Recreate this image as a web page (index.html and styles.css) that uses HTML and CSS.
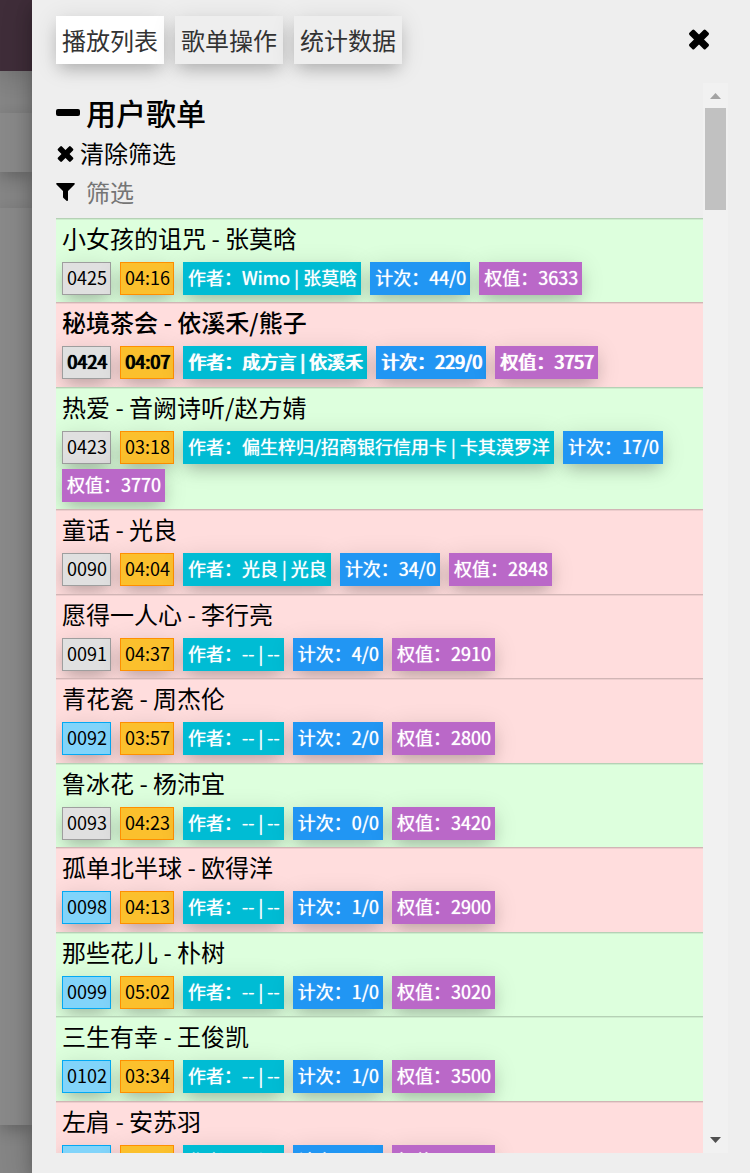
FILE: index.html
```
<!DOCTYPE html>
<html lang="zh-CN">
<head>
<meta charset="utf-8">
<meta name="viewport" content="width=device-width, initial-scale=1">
<title>播放列表</title>
<link rel="stylesheet" href="styles.css">
</head>
<body>
<div class="app">
  <div class="page" aria-hidden="true">
    <div class="page-header"></div>
    <div class="page-card"></div>
    <div class="page-card page-card-tall"></div>
  </div>
  <aside class="drawer">
    <header class="drawer-head">
      <nav class="tabs">
        <button class="tab active" type="button">播放列表</button>
        <button class="tab" type="button">歌单操作</button>
        <button class="tab" type="button">统计数据</button>
      </nav>
      <button class="close" type="button" aria-label="关闭">
        <svg width="22" height="22" viewBox="0 0 22 22"><g transform="rotate(45 11 10.500)"><rect x="-.5" y="7" width="23" height="7" rx="1.500"/><rect x="7.500" y="-1" width="7" height="23" rx="1.500"/></g></svg>
      </button>
    </header>
    <div class="viewport">
      <main class="content">
        <h2 class="heading"><svg width="24" height="8" viewBox="0 0 24 8"><rect y="1" width="24" height="7" rx="2"/></svg>用户歌单</h2>
        <button class="clear" type="button"><svg width="18" height="18" viewBox="0 0 18 18"><g transform="rotate(45 9.500 10)"><rect x=".5" y="7.200" width="18" height="5.600" rx="1.200"/><rect x="6.700" y="1" width="5.600" height="18" rx="1.200"/></g></svg>清除筛选</button>
        <label class="filter"><svg width="20" height="20" viewBox="0 0 20 20"><path d="M1 1h17c1 0 1 1 .5 1.500L12 9v9c0 1-.8 1.200-1.500.7L7.500 16c-.4-.4-.5-.6-.5-1V9L.5 2.500C0 2 0 1 1 1z"/></svg><input class="filter-input" type="text" placeholder="筛选" aria-label="筛选"></label>
        <ul class="songs">
          <li class="song"><div class="title">小女孩的诅咒 - 张莫晗</div><div class="tags"><span class="tag id">0425</span><span class="tag time">04:16</span><span class="tag author">作者：Wimo | 张莫晗</span><span class="tag count">计次：44/0</span><span class="tag weight">权值：3633</span></div></li>
          <li class="song red playing"><div class="title">秘境茶会 - 依溪禾/熊子</div><div class="tags"><span class="tag id">0424</span><span class="tag time">04:07</span><span class="tag author">作者：成方言 | 依溪禾</span><span class="tag count">计次：229/0</span><span class="tag weight">权值：3757</span></div></li>
          <li class="song"><div class="title">热爱 - 音阙诗听/赵方婧</div><div class="tags"><span class="tag id">0423</span><span class="tag time">03:18</span><span class="tag author">作者：偏生梓归/招商银行信用卡 | 卡其漠罗洋</span><span class="tag count">计次：17/0</span><span class="tag weight">权值：3770</span></div></li>
          <li class="song red"><div class="title">童话 - 光良</div><div class="tags"><span class="tag id">0090</span><span class="tag time">04:04</span><span class="tag author">作者：光良 | 光良</span><span class="tag count">计次：34/0</span><span class="tag weight">权值：2848</span></div></li>
          <li class="song red"><div class="title">愿得一人心 - 李行亮</div><div class="tags"><span class="tag id">0091</span><span class="tag time">04:37</span><span class="tag author">作者：-- | --</span><span class="tag count">计次：4/0</span><span class="tag weight">权值：2910</span></div></li>
          <li class="song red"><div class="title">青花瓷 - 周杰伦</div><div class="tags"><span class="tag id blue">0092</span><span class="tag time">03:57</span><span class="tag author">作者：-- | --</span><span class="tag count">计次：2/0</span><span class="tag weight">权值：2800</span></div></li>
          <li class="song"><div class="title">鲁冰花 - 杨沛宜</div><div class="tags"><span class="tag id">0093</span><span class="tag time">04:23</span><span class="tag author">作者：-- | --</span><span class="tag count">计次：0/0</span><span class="tag weight">权值：3420</span></div></li>
          <li class="song red"><div class="title">孤单北半球 - 欧得洋</div><div class="tags"><span class="tag id blue">0098</span><span class="tag time">04:13</span><span class="tag author">作者：-- | --</span><span class="tag count">计次：1/0</span><span class="tag weight">权值：2900</span></div></li>
          <li class="song"><div class="title">那些花儿 - 朴树</div><div class="tags"><span class="tag id blue">0099</span><span class="tag time">05:02</span><span class="tag author">作者：-- | --</span><span class="tag count">计次：1/0</span><span class="tag weight">权值：3020</span></div></li>
          <li class="song"><div class="title">三生有幸 - 王俊凯</div><div class="tags"><span class="tag id blue">0102</span><span class="tag time">03:34</span><span class="tag author">作者：-- | --</span><span class="tag count">计次：1/0</span><span class="tag weight">权值：3500</span></div></li>
          <li class="song red"><div class="title">左肩 - 安苏羽</div><div class="tags"><span class="tag id blue">0103</span><span class="tag time">04:38</span><span class="tag author">作者：-- | --</span><span class="tag count">计次：1/0</span><span class="tag weight">权值：3000</span></div></li>
        </ul>
      </main>
      <div class="scrollbar" aria-hidden="true">
        <svg width="11" height="6" viewBox="0 0 11 6"><path d="M0 6L5.500 0L11 6z" fill="#a3a3a3"/></svg>
        <div class="thumb"></div>
        <svg class="down" width="11" height="6" viewBox="0 0 11 6"><path d="M0 0h11L5.500 6z" fill="#505050"/></svg>
      </div>
    </div>
  </aside>
</div>
</body>
</html>
```
FILE: styles.css
```
* { box-sizing: border-box; }

body {
  margin: 0;
  background: #888;
  color: #000;
  font-family: "Noto Sans CJK SC", sans-serif;
  font-size: 24px;
  line-height: 36px;
}

button, input {
  margin: 0;
  padding: 0;
  border: 0;
  background: none;
  color: inherit;
  font: inherit;
}

svg { display: block; flex: none; fill: #000; overflow: visible; }

.app { display: flex; height: 100vh; overflow: hidden; }

/* Dimmed page left visible beside the drawer */
.page {
  flex: none;
  display: flex;
  flex-direction: column;
  width: 32px;
  padding-bottom: 48px;
  background: #858585;
}
.page-header { height: 71px; margin-bottom: 42px; background: #3f2d39; box-shadow: 0 4px 24px rgba(0, 0, 0, .2); }
.page-card { height: 59px; margin-bottom: 36px; background: #898989; box-shadow: 0 6px 15px rgba(0, 0, 0, .22); }
.page-card-tall { flex: 1; height: auto; margin-bottom: 0; }

.drawer {
  position: relative;
  flex: 1;
  min-width: 0;
  display: flex;
  flex-direction: column;
  padding: 16px 22px 20px 24px;
  background: #eee;
  box-shadow: 0 6px 15px rgba(0, 0, 0, .2), 0 6px 30px rgba(0, 0, 0, .19);
}

.drawer-head { display: flex; justify-content: space-between; margin-bottom: 19px; }
.tabs { display: flex; gap: 11px; }
.tab {
  height: 48px;
  padding: 0 6px;
  background: #eee;
  color: #333;
  box-shadow: 0 8px 16px -4px rgba(0, 0, 0, .2), 0 4px 24px rgba(0, 0, 0, .12);
}
.tab.active { background: #fff; }
.close { display: flex; align-items: center; height: 48px; padding: 0 18px; }

.viewport { flex: 1; min-height: 0; display: flex; overflow: hidden; }
.content { flex: 1; min-width: 0; overflow: hidden; }

.heading {
  display: flex;
  align-items: center;
  gap: 6px;
  margin: 8px 0 2px;
  font-size: 30px;
  font-weight: 500;
  line-height: 42px;
}
.clear { display: flex; align-items: center; gap: 6px; }
.filter { display: flex; align-items: center; gap: 10px; margin: 3px 0 8px; }
.filter-input { flex: 1; min-width: 0; height: 36px; outline: 0; }
.filter-input::placeholder { color: #757575; opacity: 1; }

.songs { margin: 0; padding: 0; list-style: none; }
.song {
  padding: 1px 6px 7px;
  overflow: hidden;
  border-top: 1px solid rgba(0, 0, 0, .18);
  background: #dfd;
  box-shadow: inset 0 1px rgba(0, 0, 0, .07);
}
.song:nth-child(even) { padding-bottom: 8px; }
.song.red { background: #fdd; }
.title { margin-bottom: 6px; }
.playing .title { font-weight: 500; }

.tags { display: flex; flex-wrap: wrap; gap: 5px 9px; }
.tag {
  padding: 0 3px 2px 4px;
  border: 1px solid;
  color: #fff;
  font-size: 18px;
  line-height: 29px;
  box-shadow: 0 8px 16px -4px rgba(0, 0, 0, .2), 0 4px 24px rgba(0, 0, 0, .12);
}
.id { background: #e0e0e0; border-color: #9e9e9e; color: #000; }
.id.blue { background: #81d4fa; border-color: #03a9f4; }
.time { background: #fbc02d; border-color: #ff8f00; color: #000; }
.author { background: #00bcd4; border-color: #00bcd4; }
.count { background: #2196f3; border-color: #2196f3; }
.weight { background: #ba68c8; border-color: #ba68c8; }
.author, .count, .weight { text-shadow: 0 0 1px currentColor; }
.playing .tag { text-shadow: 0 0 1px currentColor, 1px 0 currentColor; }

.scrollbar {
  flex: none;
  display: flex;
  flex-direction: column;
  align-items: center;
  width: 25px;
  padding: 10px 0;
  background: #f1f1f1;
}
.thumb { width: 21px; height: 102px; margin-top: 9px; background: #c1c1c1; }
.down { margin-top: auto; }
```
